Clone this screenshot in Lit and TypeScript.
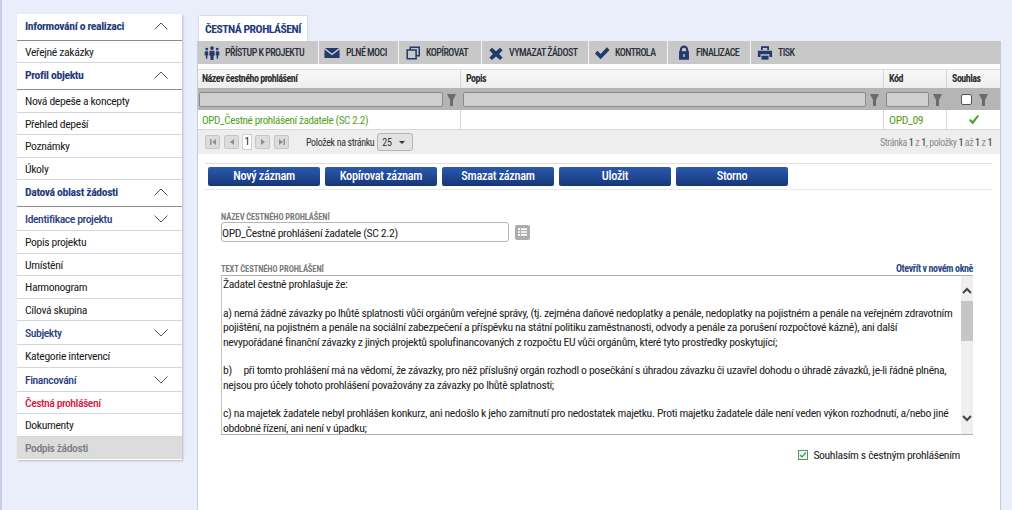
import { LitElement, html, css, svg } from "lit";
import { customElement } from "lit/decorators.js";

type NavRow = { t: string; k: "head" | "sub" | "item" | "active" | "off"; h: number; chev?: "up" | "down" };
const NAV: NavRow[] = [
  { t: "Informování o realizaci", k: "head", h: 27, chev: "up" },
  { t: "Veřejné zakázky", k: "item", h: 22 },
  { t: "Profil objektu", k: "head", h: 27, chev: "up" },
  { t: "Nová depeše a koncepty", k: "item", h: 23 },
  { t: "Přehled depeší", k: "item", h: 22 },
  { t: "Poznámky", k: "item", h: 23 },
  { t: "Úkoly", k: "item", h: 22 },
  { t: "Datová oblast žádosti", k: "head", h: 27, chev: "up" },
  { t: "Identifikace projektu", k: "sub", h: 24, chev: "down" },
  { t: "Popis projektu", k: "item", h: 23 },
  { t: "Umístění", k: "item", h: 22 },
  { t: "Harmonogram", k: "item", h: 23 },
  { t: "Cílová skupina", k: "item", h: 22 },
  { t: "Subjekty", k: "sub", h: 24, chev: "down" },
  { t: "Kategorie intervencí", k: "item", h: 23 },
  { t: "Financování", k: "sub", h: 24, chev: "down" },
  { t: "Čestná prohlášení", k: "active", h: 22 },
  { t: "Dokumenty", k: "item", h: 23 },
  { t: "Podpis žádosti", k: "off", h: 23 },
];

const ICONS = {
  people: svg`<circle cx="9" cy="3.500" r="2.100"/><path d="M6.400 6.400h5.200l.6 5.400h-1.300l-.3 5H7.400l-.3-5H5.800z"/><circle cx="3.100" cy="4.600" r="1.600"/><path d="M1 7h3.600L4.800 11.500H4l-.3 4H2.300L2 11.500H.6z"/><circle cx="14.900" cy="4.600" r="1.600"/><path d="M13.400 7H17l.4 4.500h-1.400l-.3 4h-1.400l-.3-4h-.8z"/>`,
  mail: svg`<path d="M1 3.500h16l-8 6z"/><path d="M.5 5v9.500h17V5L9 11.500z"/>`,
  copy: svg`<path fill="none" stroke="currentColor" stroke-width="1.700" d="M6 5V2.500h10v9.500h-3M2.500 5.500h10v10h-10z"/>`,
  x: svg`<path d="M4.500 3 9 7l4.500-4 3 3L12.500 10l4 4-3 3L9 13l-4.500 4-3-3 4-4-4-4z"/>`,
  check: svg`<path d="M1 9.500l3-3 3.500 3.500 7-7.500 3 3L7.500 16z"/>`,
  lock: svg`<path fill-rule="evenodd" d="M3 7V5.500a6 5 0 0 1 12 0V7h1v9.500H2V7zm3 0h6V5.500a3 2.500 0 0 0-6 0zm2 3v3.500h2V10z" transform="matrix(.8 0 0 1 1.800 0)"/>`,
  print: svg`<path d="M4.500 1.500h9v4h-2v-2h-5v2h-2z"/><path d="M1 6.500h16v7h-3v-3H4v3H1z"/><path d="M5 12h8v4.500H5z"/>`,
};

const chevron = (dir: "up" | "down") => html`<svg class="chev" width="14" height="8" viewBox="0 0 14 8">
  <path fill="none" stroke="#555" stroke-width="1" d=${dir === "up" ? "M.5 7.500 7 1l6.500 6.500" : "M.5.5 7 7 13.500.5"}></path>
</svg>`;

const funnel = html`<svg class="funnel" width="9" height="12" viewBox="0 0 9 12"><path fill="#6b6b6b" d="M0 0h9L6 6v6H3V6z"></path></svg>`;

@customElement("app-root")
export class AppRoot extends LitElement {
  static styles = css`
    :host {
      display: block;
      width: 1012px;
      height: 510px;
      overflow: hidden;
      background: #eaeefb;
      font-family: Roboto, "Liberation Sans", sans-serif;
      font-stretch: 75%;
      font-size: 11.700px;
      letter-spacing: -0.36px;
      color: #1a1a1a;
      white-space: nowrap;
    }
    .page {
      display: flex;
      height: 510px;
      border-left: 2px solid #c6cbe6;
      box-sizing: border-box;
      padding-left: 15px;
    }
    .side {
      width: 165px;
      margin-top: 14px;
      align-self: flex-start;
      background: #fff;
      box-shadow: 1px 1px 2px #b5b9c6;
      flex: none;
    }
    .nav {
      display: flex;
      align-items: center;
      justify-content: space-between;
      box-sizing: border-box;
      padding: 0 14px 0 8px;
      border-bottom: 1px solid #d3d6de;
    }
    .nav.head {
      font-weight: 700;
      color: #233b7c;
      border-bottom: 1px solid #8c8c8c;
      padding-bottom: 2px;
    }
    .nav.sub { color: #2b4180; font-weight: 500; letter-spacing: -0.42px; }
    .nav.active { color: #d4173f; font-weight: 500; letter-spacing: -0.48px; }
    .nav.off { background: #dcdcdc; color: #7b7b7b; font-weight: 500; letter-spacing: -0.42px; border-bottom: 1px solid #fff; }
    .chev { display: block; }
    .main {
      margin-left: 15px;
      width: 804px;
      display: flex;
      flex-direction: column;
      flex: none;
    }
    .tabs { display: flex; padding: 15px 0 0 1px; height: 26px; }
    .tab {
      width: 110px;
      box-sizing: border-box;
      height: 26px;
      background: #fff;
      border: 1px solid #d8dce8;
      border-bottom: none;
      border-radius: 2px 2px 0 0;
      color: #233b7c;
      font-weight: 700;
      padding: 6px 0 0 6px;
      line-height: 15px;
      letter-spacing: -0.5px;
    }
    .panel {
      flex: 1;
      background: #fff;
      border-left: 1px solid #c5cada;
      border-right: 1px solid #c5cada;
    }
    .toolbar {
      display: flex;
      height: 23px;
      background: #c8c8c8;
      margin-bottom: 5px;
      font-size: 10px;
      letter-spacing: -0.55px;
      font-weight: 500;
      color: #2a2f3a;
    }
    .tool {
      display: flex;
      align-items: center;
      box-sizing: border-box;
      border-right: 1px solid #f2f2f2;
      line-height: 23px;
    }
    .tool:last-child { border-right: none; }
    .tool svg { fill: #233a6d; color: #233a6d; flex: none; }
    .cols { display: grid; grid-template-columns: 263px 423px 63px 53px; }
    .hd {
      height: 19px;
      box-sizing: border-box;
      border-top: 1px solid #dcdcdc;
      border-right: 1px solid #d6d6d6;
      background: linear-gradient(#f8f8f8, #eeeeee);
      font-size: 10px;
      letter-spacing: -0.5px;
      font-weight: 700;
      color: #2e2e2e;
      line-height: 18px;
      padding-left: 5px;
    }
    .hd:first-child { padding-left: 4px; }
    .hd:nth-child(4) { border-right: none; }
    .flt {
      height: 22px;
      background: #b5b5b5;
      display: flex;
      align-items: center;
      box-sizing: border-box;
      padding: 0 5px 0 1px;
      gap: 3px;
    }
    .flt.mid { padding-left: 2px; }
    .flt input {
      flex: 1;
      min-width: 0;
      height: 15px;
      box-sizing: border-box;
      background: #cfcfcf;
      border: 1px solid #8a8a8a;
      border-radius: 2px;
      padding: 0;
      margin: 0;
    }
    .flt .funnel { margin: 1px 0 0 1px; flex: none; }
    .flt.center { gap: 6px; padding: 0 0 0 14px; }
    .box {
      width: 11px;
      height: 11px;
      box-sizing: border-box;
      background: #fff;
      border: 1px solid #555;
      border-radius: 2px;
    }
    .cell {
      height: 20px;
      box-sizing: border-box;
      border-right: 1px solid #d6d6d6;
      border-bottom: 1px solid #d6d6d6;
      color: #54a018;
      font-size: 11.100px;
      line-height: 19px;
      padding: 1px 0 0 4px;
    }
    .cell.code { font-size: 11.700px; padding-left: 5px; }
    .cell.mid { display: flex; align-items: center; justify-content: center; padding: 0; border-right: none; }
    .pager {
      height: 24px;
      background: #eeeeee;
      display: flex;
      align-items: center;
      font-size: 10px;
      color: #333;
      padding-left: 7px;
    }
    .pbtn {
      width: 15px;
      height: 14px;
      box-sizing: border-box;
      background: #dcdcdc;
      border: 1px solid #c6c6c6;
      border-radius: 2px;
      display: flex;
      align-items: center;
      justify-content: center;
      flex: none;
      margin-right: 4px;
    }
    .pcur {
      width: 10px;
      height: 16px;
      margin: 0 3px 0 -1px;
      background: #fff;
      border: 1px solid #d0d0d0;
      box-sizing: border-box;
      text-align: center;
      line-height: 14px;
      font-size: 11px;
      color: #222;
      flex: none;
    }
    .plabel { margin-left: 13px; }
    .psel {
      margin-left: 3px;
      width: 36px;
      height: 18px;
      box-sizing: border-box;
      border: 1px solid #b4b4b4;
      border-radius: 3px;
      background: #e2e2e2;
      display: flex;
      align-items: center;
      justify-content: space-between;
      padding: 0 7px 0 4px;
    }
    .caret { width: 0; height: 0; border: 3px solid transparent; border-top: 3px solid #333; border-bottom: none; }
    .pinfo { margin-left: auto; padding-right: 8px; color: #8b8b8b; letter-spacing: -0.42px; }
    .pinfo b { color: #555; font-weight: 500; }
    .actions {
      margin: 9px 8px 0 7px;
      height: 27px;
      box-sizing: border-box;
      border-top: 1px solid #e0e0e0;
      border-bottom: 1px solid #e8e8e8;
      display: flex;
      gap: 5px;
      padding: 3px 0 0 3px;
    }
    .btn {
      width: 112px;
      height: 19px;
      border-radius: 2px;
      background: linear-gradient(#2c59ae, #163777);
      color: #fff;
      text-align: center;
      font-size: 12.300px;
      line-height: 19px;
      font-weight: 500;
      letter-spacing: -0.3px;
    }
    .form { padding: 22px 27px 0 23px; }
    .lbl {
      font-size: 8.500px;
      font-weight: 700;
      color: #7c7c7c;
      line-height: 10px;
      letter-spacing: -0.1px;
    }
    .row { display: flex; align-items: center; gap: 6px; }
    .inp {
      width: 288px;
      height: 20px;
      box-sizing: border-box;
      border: 1px solid #b6b6b6;
      border-radius: 3px;
      line-height: 20px;
      color: #222;
    }
    .listbtn {
      width: 15px;
      height: 15px;
      border-radius: 2px;
      background: #adadad;
      display: flex;
      align-items: center;
      justify-content: center;
    }
    .lblrow { display: flex; justify-content: space-between; align-items: flex-end; margin-top: 21px; }
    .link { font-size: 10px; font-weight: 700; color: #2b4a85; line-height: 11px; letter-spacing: -0.38px; }
    .area {
      margin-top: 1px;
      width: 752px;
      height: 160px;
      box-sizing: border-box;
      display: flex;
      border-top: 1px solid #b0b0b0;
      border-bottom: 1px solid #b0b0b0;
      border-left: 1px solid #c4c4c4;
      overflow: hidden;
    }
    .txt {
      flex: 1;
      min-width: 0;
      padding: 1px 0 0 1px;
      line-height: 14.370px;
      color: #222;
    }
    .sb {
      width: 12px;
      flex: none;
      background: #efefef;
      display: flex;
      flex-direction: column;
      align-items: center;
    }
    .sb svg { flex: none; }
    .sb .up { margin-top: 11px; }
    .sb .thumb { width: 12px; height: 40px; background: #c6c6c6; margin-top: 7px; }
    .sb .dn { margin-top: auto; margin-bottom: 12px; }
    .agree {
      display: flex;
      justify-content: flex-end;
      align-items: center;
      gap: 5px;
      margin: 13px 13px 0 0;
      width: 739px;
      color: #222;
    }
    .agree .ck {
      width: 10px;
      height: 10px;
      box-sizing: border-box;
      border: 1px solid #4f9a60;
      background: #eef6ee;
      display: flex;
    }
  `;

  private tool(icon: keyof typeof ICONS, label: string, w: number, pad: number, gap: number) {
    return html`<div class="tool" style="width:${w}px;padding-left:${pad}px;gap:${gap}px">
      <svg width="16" height="16" viewBox="0 0 18 18">${ICONS[icon]}</svg><span>${label}</span>
    </div>`;
  }

  private pbtn(d: string) {
    return html`<div class="pbtn"><svg width="8" height="8" viewBox="0 0 8 8"><path fill="#8f8f8f" d=${d}></path></svg></div>`;
  }

  render() {
    return html`<div class="page">
      <nav class="side">
        ${NAV.map(
          (n) => html`<div class="nav ${n.k}" style="height:${n.h}px">
            <span>${n.t}</span>${n.chev ? chevron(n.chev) : ""}
          </div>`
        )}
      </nav>
      <div class="main">
        <div class="tabs"><div class="tab">ČESTNÁ PROHLÁŠENÍ</div></div>
        <div class="panel">
          <div class="toolbar">
            ${this.tool("people", "PŘÍSTUP K PROJEKTU", 121, 6, 5)}
            ${this.tool("mail", "PLNÉ MOCI", 80, 5, 6)}
            ${this.tool("copy", "KOPÍROVAT", 83, 6, 5)}
            ${this.tool("x", "VYMAZAT ŽÁDOST", 107, 6, 5)}
            ${this.tool("check", "KONTROLA", 79, 5, 5)}
            ${this.tool("lock", "FINALIZACE", 83, 8, 4)}
            ${this.tool("print", "TISK", 100, 6, 5)}
          </div>
          <div class="cols">
            <div class="hd">Název čestného prohlášení</div>
            <div class="hd">Popis</div>
            <div class="hd">Kód</div>
            <div class="hd">Souhlas</div>
            <div class="flt"><input />${funnel}</div>
            <div class="flt mid"><input />${funnel}</div>
            <div class="flt mid"><input />${funnel}</div>
            <div class="flt center"><div class="box"></div>${funnel}</div>
            <div class="cell">OPD_Čestné prohlášení žadatele (SC 2.2)</div>
            <div class="cell"></div>
            <div class="cell code">OPD_09</div>
            <div class="cell mid">
              <svg width="10" height="10" viewBox="0 0 10 10"><path fill="#4aa02c" d="M0 5.500l1.500-1.500L3.500 6 8.500 0 10 1 3.800 9.500z"></path></svg>
            </div>
          </div>
          <div class="pager">
            ${this.pbtn("M1 1h1.500v6H1zM7 1v6L3 4z")}
            ${this.pbtn("M6 1v6L2 4z")}
            <div class="pcur">1</div>
            ${this.pbtn("M2 1v6l4-3z")}
            ${this.pbtn("M1 1v6l4-3zM5.500 1H7v6H5.500z")}
            <span class="plabel">Položek na stránku</span>
            <div class="psel"><span>25</span><span class="caret"></span></div>
            <span class="pinfo">Stránka <b>1</b> z <b>1</b>, položky <b>1</b> až <b>1</b> z <b>1</b></span>
          </div>
          <div class="actions">
            <div class="btn">Nový záznam</div>
            <div class="btn">Kopírovat záznam</div>
            <div class="btn">Smazat záznam</div>
            <div class="btn">Uložit</div>
            <div class="btn">Storno</div>
          </div>
          <div class="form">
            <div class="lbl">NÁZEV ČESTNÉHO PROHLÁŠENÍ</div>
            <div class="row">
              <div class="inp">OPD_Čestné prohlášení žadatele (SC 2.2)</div>
              <div class="listbtn">
                <svg width="9" height="8" viewBox="0 0 11 9"><path fill="#fff" d="M0 0h2.500v2H0zM3.500 0H11v2H3.500zM0 3.500h2.500v2H0zM3.500 3.500H11v2H3.500zM0 7h2.500v2H0zM3.500 7H11v2H3.500z"></path></svg>
              </div>
            </div>
            <div class="lblrow">
              <div class="lbl">TEXT ČESTNÉHO PROHLÁŠENÍ</div>
              <div class="link">Otevřít v novém okně</div>
            </div>
            <div class="area">
              <div class="txt">
                Žadatel čestně prohlašuje že:<br /><br />
                a) nemá žádné závazky po lhůtě splatnosti vůči orgánům veřejné správy, (tj. zejména daňové nedoplatky a penále, nedoplatky na pojistném a penále na veřejném zdravotním<br />
                pojištění, na pojistném a penále na sociální zabezpečení a příspěvku na státní politiku zaměstnanosti, odvody a penále za porušení rozpočtové kázně), ani další<br />
                nevypořádané finanční závazky z jiných projektů spolufinancovaných z rozpočtu EU vůči orgánům, které tyto prostředky poskytující;<br /><br />
                b)&nbsp;&nbsp;&nbsp;&nbsp; při tomto prohlášení má na vědomí, že závazky, pro něž příslušný orgán rozhodl o posečkání s úhradou závazku či uzavřel dohodu o úhradě závazků, je-li řádně plněna,<br />
                nejsou pro účely tohoto prohlášení považovány za závazky po lhůtě splatnosti;<br /><br />
                c) na majetek žadatele nebyl prohlášen konkurz, ani nedošlo k jeho zamítnutí pro nedostatek majetku. Proti majetku žadatele dále není veden výkon rozhodnutí, a/nebo jiné<br />
                obdobné řízení, ani není v úpadku;
              </div>
              <div class="sb">
                <svg class="up" width="10" height="7" viewBox="0 0 10 7"><path fill="none" stroke="#444" stroke-width="2" d="M1 6l4-4 4 4"></path></svg>
                <div class="thumb"></div>
                <svg class="dn" width="10" height="7" viewBox="0 0 10 7"><path fill="none" stroke="#444" stroke-width="2" d="M1 1l4 4 4-4"></path></svg>
              </div>
            </div>
            <div class="agree">
              <span class="ck"><svg width="8" height="8" viewBox="0 0 8 8"><path fill="none" stroke="#3f9a52" stroke-width="1.200" d="M1 4l2 2 4-4.500"></path></svg></span>
              <span>Souhlasím s čestným prohlášením</span>
            </div>
          </div>
        </div>
      </div>
    </div>`;
  }
}
